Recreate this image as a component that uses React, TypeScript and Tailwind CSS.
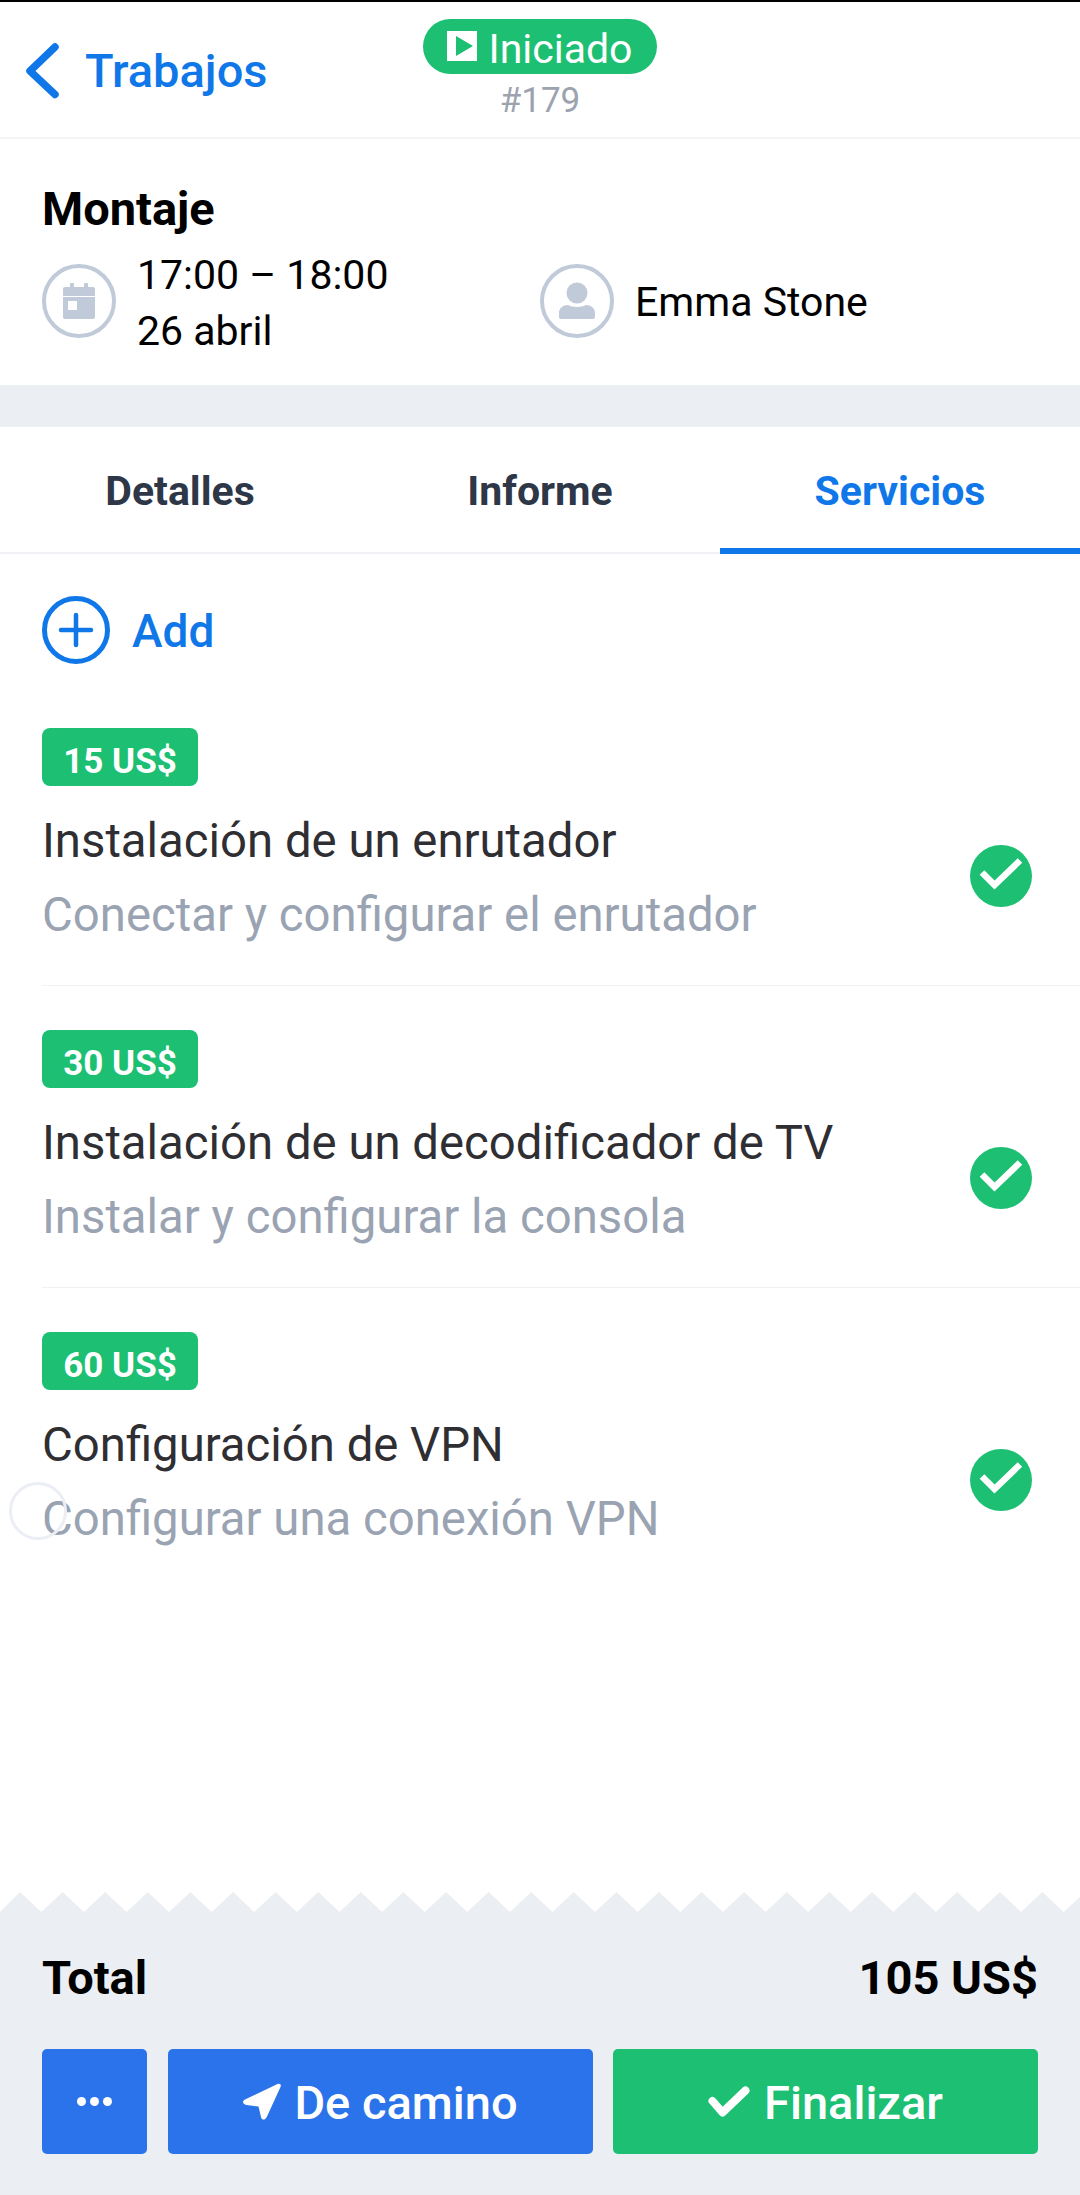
const SERVICES = [
  { price: "15 US$", title: "Instalación de un enrutador", desc: "Conectar y configurar el enrutador" },
  { price: "30 US$", title: "Instalación de un decodificador de TV", desc: "Instalar y configurar la consola" },
  { price: "60 US$", title: "Configuración de VPN", desc: "Configurar una conexión VPN" },
];

function Zigzag() {
  const points = ["0,20"];
  for (let i = 0; i < 27; i++) {
    points.push(`${20 + i * 42.6},0`, `${41.3 + i * 42.6},20`);
  }
  points.push("1080,20");
  return (
    <svg width="1080" height="20" className="block shrink-0">
      <polygon points={points.join(" ")} fill="#ebeef3" />
    </svg>
  );
}

function CalendarCircle() {
  return (
    <div className="w-[74px] h-[74px] rounded-full border-[4px] border-[#c0cad8] flex items-center justify-center shrink-0">
      <svg width="32" height="36" viewBox="0 0 32 36">
        <path fill="#c0cad8" d="M7 1.500a2 2 0 0 1 4 0V4h10V1.500a2 2 0 0 1 4 0V4h5a2 2 0 0 1 2 2v7H0V6a2 2 0 0 1 2-2h5z" />
        <path fill="#c0cad8" fillRule="evenodd" d="M0 14h32v20a2 2 0 0 1-2 2H2a2 2 0 0 1-2-2zM5 18v9h9v-9z" />
      </svg>
    </div>
  );
}

function UserCircle() {
  return (
    <div className="w-[74px] h-[74px] rounded-full border-[4px] border-[#c0cad8] flex items-center justify-center shrink-0">
      <svg width="38" height="38" viewBox="0 0 38 38">
        <circle cx="19" cy="11" r="10.5" fill="#c0cad8" />
        <path fill="#c0cad8" d="M1 31c0-5 4-8 9-8 4 2.500 14 2.500 18 0 5 0 9 3 9 8v4a2 2 0 0 1-2 2H3a2 2 0 0 1-2-2z" />
      </svg>
    </div>
  );
}

function ServiceRow({ price, title, desc, last }: { price: string; title: string; desc: string; last: boolean }) {
  return (
    <div className={last ? "pt-[43.6px] -mr-[42px] pr-[42px]" : "pt-[43.6px] pb-[42.4px] -mr-[42px] pr-[42px] border-b-[1px] border-[#f1f2f5]"}>
      <div className="h-[58px] w-[156px] rounded-[8px] bg-[#1dbf73] text-white text-[35px] font-bold flex items-center justify-center pt-[10px]">
        {price}
      </div>
      <div className="flex items-center mt-[27px]">
        <div className="flex-1">
          <div className="text-[47.3px] text-[#2f2f33] leading-[56px]">{title}</div>
          <div className="text-[47.3px] text-[#9aa3b2] leading-[56px] mt-[18px]">{desc}</div>
        </div>
        <svg width="62" height="62" viewBox="0 0 62 62" fill="none" className="mr-[6px] mb-[3px]">
          <circle cx="31" cy="31" r="31" fill="#1dbf73" />
          <path d="M12 27.500L24.500 40 50 15.500" stroke="white" strokeWidth="6.500" />
        </svg>
      </div>
    </div>
  );
}

export default function App() {
  return (
    <div className="relative w-[1080px] h-[2195px] bg-white font-[Roboto,sans-serif] flex flex-col overflow-hidden">
      <div className="h-[2px] bg-black" />

      {/* header */}
      <div className="h-[137px] border-b-[2px] border-[#f3f4f6] flex items-start relative">
        <div className="flex items-center pl-[25px] pt-[41px]">
          <svg width="34" height="56" viewBox="0 0 34 56" fill="none">
            <path d="M30 4L5 28l25 23.500" stroke="#1077e8" strokeWidth="7.500" strokeLinecap="round" strokeLinejoin="round" />
          </svg>
          <span className="text-[#1077e8] text-[47px] leading-[56px] font-medium ml-[26px]">Trabajos</span>
        </div>
        <div className="absolute left-0 right-0 top-[17px] flex flex-col items-center">
          <div className="h-[55px] w-[234px] rounded-full bg-[#1dbf73] flex items-center justify-center text-white text-[41px] leading-[48px] pt-[5px]">
            <svg width="30" height="30" viewBox="0 0 30 30" className="mr-[11px] -mt-[7px]">
              <path fill="white" fillRule="evenodd" d="M0 0h30v30H0zM9 5v20l17-10z" />
            </svg>
            Iniciado
          </div>
          <div className="text-[#9ca3af] text-[35px] leading-[36px] mt-[9px]">#179</div>
        </div>
      </div>

      {/* job info */}
      <div className="h-[246px] px-[42px] pt-[42px]">
        <div className="text-black text-[47px] font-bold leading-[56px]">Montaje</div>
        <div className="flex items-center mt-[6px]">
          <div className="flex items-center w-[498px]">
            <CalendarCircle />
            <div className="ml-[21px] mt-[4px] text-[41px] leading-[56px] text-black">
              <div>17:00 – 18:00</div>
              <div>26 abril</div>
            </div>
          </div>
          <UserCircle />
          <span className="ml-[21px] mt-[4px] text-[41px] text-black">Emma Stone</span>
        </div>
      </div>

      <div className="h-[42px] bg-[#ebeef3]" />

      {/* tabs */}
      <div className="h-[127px] grid grid-cols-3 border-b-[2px] border-[#f1f2f5] text-center text-[41px] font-bold">
        <div className="text-[#2d3748] pt-[34px]">Detalles</div>
        <div className="text-[#2d3748] pt-[34px]">Informe</div>
        <div className="text-[#1077e8] pt-[34px] border-b-[6px] border-[#1077e8] h-[127px]">Servicios</div>
      </div>

      {/* services */}
      <div className="relative flex-1 px-[42px] pt-[42px]">
        <div className="flex items-center h-[68px]">
          <div className="w-[68px] h-[68px] rounded-full border-[5px] border-[#1077e8] flex items-center justify-center">
            <svg width="36" height="36" viewBox="0 0 36 36" fill="none">
              <path d="M18 3v30M3 18h30" stroke="#1077e8" strokeWidth="4.500" strokeLinecap="round" />
            </svg>
          </div>
          <span className="ml-[22px] mt-[3px] text-[#1077e8] text-[46px] font-medium">Add</span>
        </div>
        <div className="mt-[20.4px]">
          {SERVICES.map((s, i) => (
            <ServiceRow key={s.title} {...s} last={i === SERVICES.length - 1} />
          ))}
        </div>
        <div className="absolute left-[9px] top-[928px] w-[58px] h-[58px] rounded-full border-[3px] border-[#eceef5]" />
      </div>

      {/* footer */}
      <Zigzag />
      <div className="h-[283px] bg-[#ebeef3] px-[42px] pt-[40px]">
        <div className="flex justify-between items-center text-black text-[47px] font-bold h-[52px]">
          <span>Total</span>
          <span>105 US$</span>
        </div>
        <div className="flex mt-[45px] text-white text-[47px] font-medium">
          <div className="w-[105px] h-[105px] rounded-[5px] bg-[#2b73ea] flex items-center justify-center gap-[4px]">
            <span className="w-[9px] h-[9px] rounded-full bg-white" />
            <span className="w-[9px] h-[9px] rounded-full bg-white" />
            <span className="w-[9px] h-[9px] rounded-full bg-white" />
          </div>
          <div className="w-[425px] ml-[21px] h-[105px] rounded-[5px] bg-[#2b73ea] flex items-center justify-center gap-[13px] pt-[3px]">
            <svg width="38" height="38" viewBox="0 0 38 38" className="-mt-[3px]">
              <path fill="white" d="M34.500 1c2.500-1 4 .5 3 3L24 33.500c-1.500 3.500-5 4.500-6 .5l-2.500-10.500L3.500 22C-.5 21-1 18 2 16.500z" />
            </svg>
            De camino
          </div>
          <div className="w-[425px] ml-[20px] h-[105px] rounded-[5px] bg-[#1dbf73] flex items-center justify-center gap-[14px] pt-[3px]">
            <svg width="42" height="32" viewBox="0 0 42 32" fill="none" className="-mt-[3px]">
              <path d="M4.500 15l10 11.500 23-22" stroke="white" strokeWidth="8" strokeLinecap="round" strokeLinejoin="round" />
            </svg>
            Finalizar
          </div>
        </div>
      </div>
    </div>
  );
}
